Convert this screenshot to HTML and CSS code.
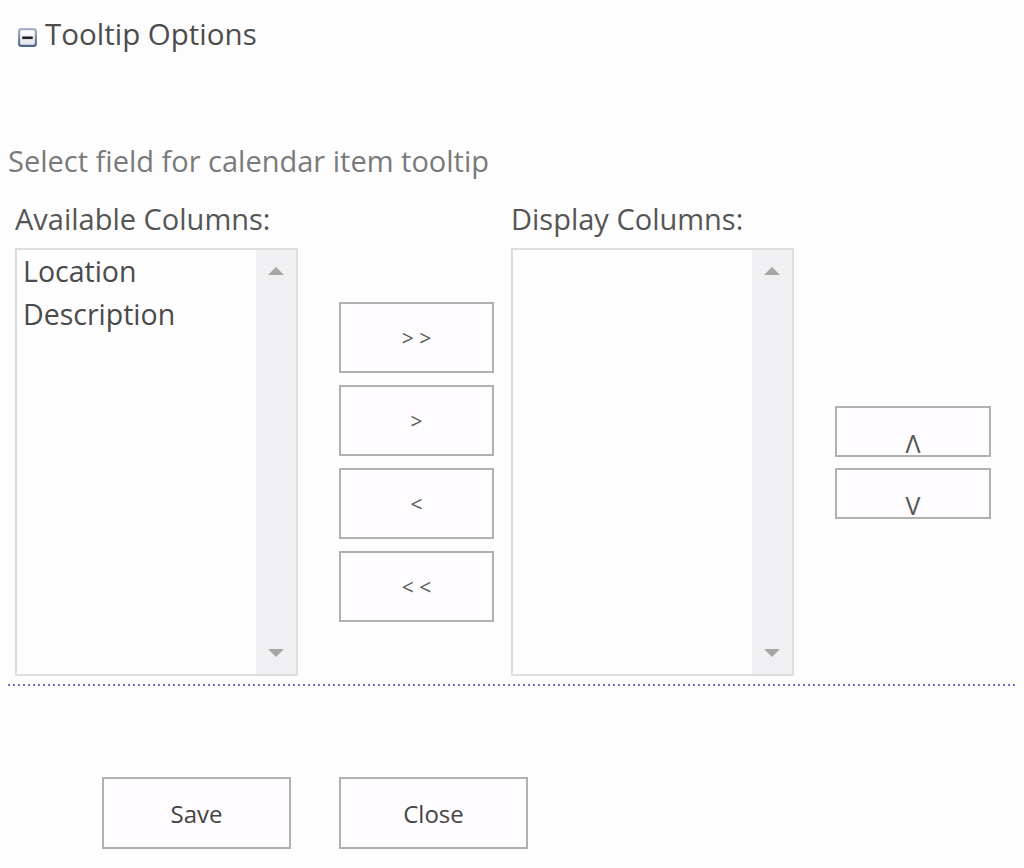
FILE: index.html
```html
<!DOCTYPE html>
<html>
<head>
<meta charset="utf-8">
<link rel="stylesheet" href="styles.css">
</head>
<body>
<div class="page">
  <div class="section-head">
    <svg class="collapse-icon" width="21" height="21" viewBox="0 0 20 20">
      <defs>
        <linearGradient id="g" x1="0" y1="0" x2="0" y2="1">
          <stop offset="0" stop-color="#a7b8cb"/>
          <stop offset="1" stop-color="#4a6180"/>
        </linearGradient>
        <linearGradient id="f" x1="0" y1="0" x2="0" y2="1">
          <stop offset="0" stop-color="#ffffff"/>
          <stop offset="1" stop-color="#dfe5ec"/>
        </linearGradient>
      </defs>
      <rect x="1" y="1" width="18" height="18" rx="3" fill="url(#g)"/>
      <rect x="3" y="3" width="14" height="14" rx="1.5" fill="url(#f)"/>
      <rect x="5" y="9" width="10" height="2.5" fill="#222"/>
    </svg>
    <span class="section-title">Tooltip Options</span>
  </div>

  <div class="intro">Select field for calendar item tooltip</div>

  <div class="columns">
    <div class="col">
      <div class="col-label">Available Columns:</div>
      <div class="listbox">
        <div class="list-items">
          <div class="list-item">Location</div>
          <div class="list-item">Description</div>
        </div>
        <div class="scrollbar">
          <span class="arrow-up"></span>
          <span class="arrow-down"></span>
        </div>
      </div>
    </div>

    <div class="move-buttons">
      <button class="btn move">&gt; &gt;</button>
      <button class="btn move">&gt;</button>
      <button class="btn move">&lt;</button>
      <button class="btn move">&lt; &lt;</button>
    </div>

    <div class="col">
      <div class="col-label">Display Columns:</div>
      <div class="listbox">
        <div class="list-items"></div>
        <div class="scrollbar">
          <span class="arrow-up"></span>
          <span class="arrow-down"></span>
        </div>
      </div>
    </div>

    <div class="order-buttons">
      <button class="btn order"><span class="order-glyph">Λ</span></button>
      <button class="btn order"><span class="order-glyph">V</span></button>
    </div>
  </div>

  <div class="divider"></div>

  <div class="actions">
    <button class="btn action">Save</button>
    <button class="btn action">Close</button>
  </div>
</div>
</body>
</html>
```

FILE: styles.css
```css
html, body {
  margin: 0;
  padding: 0;
  background: #fefdfe;
}

body {
  font-family: "Open Sans", "Noto Sans", sans-serif;
  color: #444;
}

.page {
  width: 1024px;
  height: 868px;
  padding: 0 8px;
  box-sizing: border-box;
}

.section-head {
  display: flex;
  align-items: flex-start;
  gap: 7px;
  padding: 14px 0 0 9px;
  height: 40px;
}

.collapse-icon {
  display: block;
  margin-top: 13px;
}

.section-title {
  font-size: 29.5px;
  color: #4d4d4d;
  line-height: 40px;
}

.intro {
  margin-top: 87px;
  font-size: 29px;
  line-height: 40px;
  color: #7a7a7a;
}

.columns {
  display: flex;
  align-items: flex-start;
  margin-top: 18px;
  padding-left: 7px;
}

.col {
  display: flex;
  flex-direction: column;
  width: 283px;
}

.col-label {
  font-size: 29px;
  line-height: 40px;
  height: 49px;
  color: #555;
  white-space: nowrap;
}

.listbox {
  display: flex;
  height: 428px;
  box-sizing: border-box;
  border: 2px solid #dedede;
  background: #fefdfe;
}

.list-items {
  flex: 1;
  padding: 0 0 0 6px;
}

.list-item {
  font-size: 28.5px;
  line-height: 43px;
  color: #4a4a4a;
}

.scrollbar {
  width: 40px;
  background: #f0eff1;
  display: flex;
  flex-direction: column;
  justify-content: space-between;
  align-items: center;
  padding: 17px 0 17px;
}

.arrow-up {
  width: 0;
  height: 0;
  border-left: 8px solid transparent;
  border-right: 8px solid transparent;
  border-bottom: 8px solid #a6a6a6;
}

.arrow-down {
  width: 0;
  height: 0;
  border-left: 8px solid transparent;
  border-right: 8px solid transparent;
  border-top: 8px solid #a6a6a6;
}

.btn {
  font-family: "Open Sans", "Noto Sans", sans-serif;
  background: #fefcfe;
  border: 2px solid #b0b0b0;
  color: #555;
  box-sizing: border-box;
  padding: 0;
  cursor: pointer;
}

.move-buttons {
  display: flex;
  flex-direction: column;
  gap: 12px;
  margin: 103px 17px 0 41px;
}

.move {
  width: 155px;
  height: 71px;
  font-size: 21px;
  color: #5a5a5a;
}

.order-buttons {
  display: flex;
  flex-direction: column;
  gap: 11px;
  margin: 207px 0 0 41px;
}

.order {
  width: 156px;
  height: 51px;
  display: flex;
  align-items: flex-end;
  justify-content: center;
  overflow: visible;
}

.order-glyph {
  display: block;
  font-size: 25px;
  line-height: 25px;
  margin-bottom: -1px;
  color: #555;
}

.divider {
  margin-top: 8px;
  height: 2px;
  background-image: linear-gradient(to right, #7373c8 2px, transparent 2px);
  background-size: 5px 2px;
  background-repeat: repeat-x;
}

.actions {
  display: flex;
  gap: 48px;
  margin-top: 91px;
  padding-left: 94px;
}

.action {
  width: 189px;
  height: 72px;
  font-size: 24px;
  color: #444;
}
```
